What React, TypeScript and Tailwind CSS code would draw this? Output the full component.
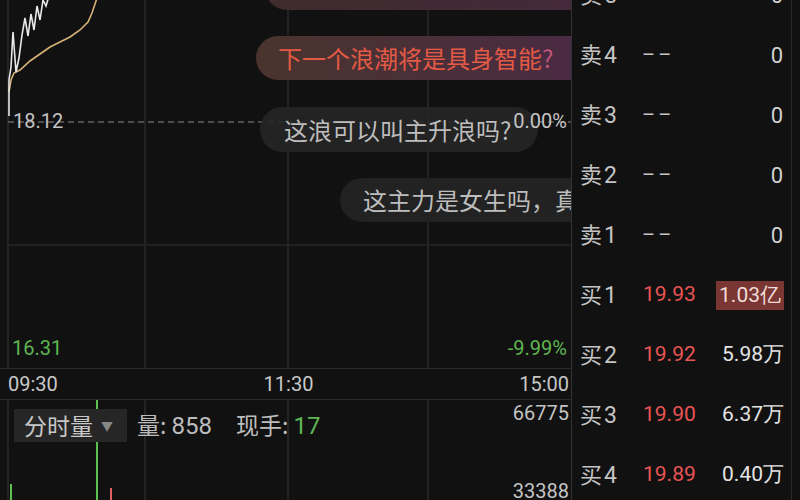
import React from 'react';

const GRID_X = [8, 145, 288, 428];

const sells = ['5', '4', '3', '2', '1'];
const buys = [
  { n: '1', price: '19.93', vol: '1.03亿', hot: true },
  { n: '2', price: '19.92', vol: '5.98万' },
  { n: '3', price: '19.90', vol: '6.37万' },
  { n: '4', price: '19.89', vol: '0.40万' },
];

const PriceChart: React.FC = () => (
  <svg className="absolute inset-0" width={572} height={368}>
    {GRID_X.map((x) => (
      <line key={x} x1={x} y1={0} x2={x} y2={368} stroke="#2a2a2a" strokeWidth={1.5} />
    ))}
    <line x1={8} y1={245} x2={572} y2={245} stroke="#262626" strokeWidth={1.5} />
    <line x1={8} y1={122} x2={572} y2={122} stroke="#8a8a8a" strokeWidth={1.2} strokeDasharray="6 4" />
    <polyline
      fill="none"
      stroke="#d9b27a"
      strokeWidth={1.6}
      points="9,92 11,80 14,73 20,70 30,61 40,54 50,47 60,42 70,37 80,30 88,22 92,13 95,4 97,-2"
    />
    <polyline
      fill="none"
      stroke="#e8e8e8"
      strokeWidth={1.6}
      points="9,116 9,80 11,67 13,32 16,72 19,58 22,35 25,18 28,36 31,14 34,30 37,6 40,20 43,0 46,6 49,-4"
    />
  </svg>
);

const VolumeChart: React.FC = () => (
  <svg className="absolute inset-0" width={572} height={100}>
    {GRID_X.map((x) => (
      <line key={x} x1={x} y1={0} x2={x} y2={100} stroke="#2a2a2a" strokeWidth={1.5} />
    ))}
    <line x1={97} y1={-2} x2={97} y2={100} stroke="#5cc24f" strokeWidth={2} />
    <line x1={11} y1={84} x2={11} y2={100} stroke="#5cc24f" strokeWidth={2} />
    <line x1={111} y1={88} x2={111} y2={100} stroke="#e06060" strokeWidth={2} />
  </svg>
);

const Bubbles: React.FC = () => (
  <div className="pointer-events-none absolute inset-0 text-[24px]">
    <div className="absolute left-[265px] top-[-34px] h-[44px] w-[340px] rounded-full bg-gradient-to-r from-[#3e2c2a] to-[#45283d]" />
    <div className="absolute left-[256px] top-[36px] flex h-[44px] w-[360px] items-center rounded-full bg-gradient-to-r from-[#4a342d] to-[#4a2945] pl-[22px] text-[#e45a44]">
      下一个浪潮将是具身智能<span className="text-[#c0567a]">?</span>
    </div>
    <div className="absolute left-[260px] top-[107px] flex h-[45px] w-[278px] items-center rounded-full bg-[#262626]/90 pl-[24px] text-[#bdbdbd]">
      这浪可以叫主升浪吗?
    </div>
    <div className="absolute left-[340px] top-[178px] flex h-[44px] w-[300px] items-center whitespace-nowrap rounded-full bg-[#222222] pl-[23px] text-[#bdbdbd]">
      这主力是女生吗，真的太强了
    </div>
  </div>
);

export default function App() {
  return (
    <div className="flex h-[500px] w-[800px] overflow-hidden bg-[#111111] font-['Noto_Sans_CJK_SC','Noto_Sans',sans-serif] text-[#c4c4c4]">
      <div className="relative flex w-[572px] shrink-0 flex-col overflow-hidden border-r-[1.5px] border-[#333333]">
        <div className="relative h-[368px] shrink-0">
          <PriceChart />
        </div>
        <div className="grid h-[32px] shrink-0 grid-cols-3 items-center border-y-[1.5px] border-[#2a2a2a] pl-[8px] pr-[2px] font-['Roboto',sans-serif] text-[20px] text-[#c8c8c8]">
          <span>09:30</span>
          <span className="text-center">11:30</span>
          <span className="text-right">15:00</span>
        </div>
        <div className="relative flex-1">
          <VolumeChart />
          <div className="relative flex items-center gap-[10px] pl-[14px] pt-[7px] text-[23px]">
            <div className="flex h-[33px] items-center gap-[8px] bg-[#262626] pl-[10px] pr-[14px] text-[#c8c8c8]">
              分时量
              <span className="text-[12px] text-[#888888]">▼</span>
            </div>
            <span className="text-[#bdbdbd]">
              量: <span className="font-['Roboto',sans-serif] text-[24px]">858</span>
            </span>
            <span className="ml-[14px] text-[#bdbdbd]">
              现手: <span className="font-['Roboto',sans-serif] text-[24px] text-[#5fb552]">17</span>
            </span>
          </div>
        </div>
        <Bubbles />
        {/* axis labels sit above the chat bubbles */}
        <div className="pointer-events-none absolute inset-0 font-['Roboto',sans-serif] text-[20px]">
          <span className="absolute left-[13px] top-[106px]">18.12</span>
          <span className="absolute right-[4px] top-[106px]">0.00%</span>
          <span className="absolute left-[12px] top-[333px] text-[#5fb552]">16.31</span>
          <span className="absolute right-[4px] top-[333px] text-[#5fb552]">-9.99%</span>
          <span className="absolute right-[2px] top-[398px]">66775</span>
          <span className="absolute right-[2px] top-[476px]">33388</span>
        </div>
      </div>

      <div className="flex w-[220px] shrink-0 flex-col border-r-[1.5px] border-[#2a2a2a]">
        <div className="-mt-[35px] flex flex-col">
          {sells.map((n) => (
            <div key={n} className="flex h-[60px] items-center px-[8px]">
              <span className="w-[62px] text-[22px]">
                卖<span className="ml-[2px] font-['Roboto',sans-serif] text-[23px]">{n}</span>
              </span>
              <span className="flex-1 font-['Roboto',sans-serif] text-[20px] tracking-[3px]">––</span>
              <span className="font-['Roboto',sans-serif] text-[22px] text-[#d0d0d0]">0</span>
            </div>
          ))}
        </div>
        <div className="h-[3px] bg-[#d9584f]" />
        <div className="flex flex-col">
          {buys.map((b) => (
            <div key={b.n} className="flex h-[60px] items-center pl-[8px] pr-[7px]">
              <span className="w-[63px] text-[22px]">
                买<span className="ml-[2px] font-['Roboto',sans-serif] text-[23px]">{b.n}</span>
              </span>
              <span className="flex-1 font-['Roboto',sans-serif] text-[21px] text-[#e85454]">{b.price}</span>
              <span
                className={
                  b.hot
                    ? "bg-[#7a3632] px-[3px] font-['Roboto',sans-serif] text-[21px] leading-[29px] text-[#f0dcd8]"
                    : "font-['Roboto',sans-serif] text-[21px] text-[#e4e4e4]"
                }
              >
                {b.vol}
              </span>
            </div>
          ))}
        </div>
      </div>
      <div className="flex-1" />
    </div>
  );
}
